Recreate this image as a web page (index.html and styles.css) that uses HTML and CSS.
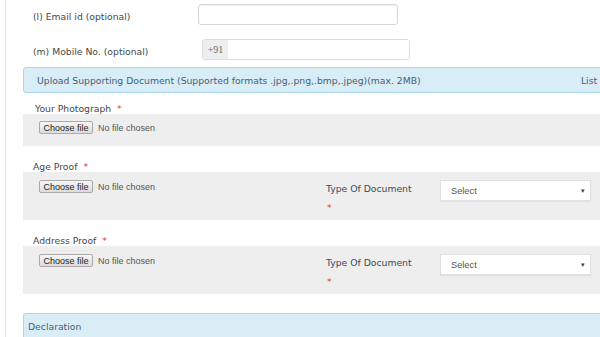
FILE: index.html
```html
<!DOCTYPE html>
<html lang="en">

<head>
  <meta charset="UTF-8">
  <title>Application Form</title>
  <link rel="stylesheet" href="styles.css">
</head>

<body>
  <div class="page">
    <div class="field-row">
      <label class="field-label">(l) Email id (optional)</label>
      <input class="text-input" type="text">
    </div>

    <div class="field-row mobile">
      <label class="field-label">(m) Mobile No. (optional)</label>
      <div class="input-group">
        <span class="addon">+91</span>
        <input class="group-input" type="text">
      </div>
    </div>

    <div class="panel">
      <span>Upload Supporting Document (Supported formats .jpg,.png,.bmp,.jpeg)(max. 2MB)</span>
      <span class="panel-right">List of</span>
    </div>

    <div class="upload first">
      <div class="upload-label photo">Your Photograph <span class="req">*</span></div>
      <div class="upload-box short">
        <div class="file">
          <span class="file-btn">Choose file</span>
          <span class="file-name">No file chosen</span>
        </div>
      </div>
    </div>

    <div class="upload">
      <div class="upload-label">Age Proof <span class="req">*</span></div>
      <div class="upload-box">
        <div class="file">
          <span class="file-btn">Choose file</span>
          <span class="file-name">No file chosen</span>
        </div>
        <div class="doc-type">Type Of Document<br><span class="req">*</span></div>
        <div class="select">Select<span class="caret">▾</span></div>
      </div>
    </div>

    <div class="upload">
      <div class="upload-label">Address Proof <span class="req">*</span></div>
      <div class="upload-box">
        <div class="file">
          <span class="file-btn">Choose file</span>
          <span class="file-name">No file chosen</span>
        </div>
        <div class="doc-type">Type Of Document<br><span class="req">*</span></div>
        <div class="select">Select<span class="caret">▾</span></div>
      </div>
    </div>

    <div class="panel declaration">Declaration</div>
  </div>
</body>

</html>
```

FILE: styles.css
```css
body {
  margin: 0;
  background: #fff;
  font-family: "DejaVu Sans", Verdana, sans-serif;
  font-size: 9.25px;
  color: #474747;
  overflow: hidden;
}

.page {
  margin-left: 5px;
  border-left: 1px solid #e2e2e2;
  padding-left: 17px;
  width: 618px;
  height: 337px;
  padding-top: 4px;
  box-sizing: border-box;
  overflow: hidden;
}

.field-row {
  display: flex;
  align-items: center;
  padding-left: 10px;
}

.field-label {
  width: 165px;
  padding-top: 3px;
}

.text-input {
  width: 200px;
  height: 21px;
  box-sizing: border-box;
  border: 1px solid #d6d6d6;
  border-radius: 3px;
  box-shadow: inset 0 1px 1px rgba(0, 0, 0, 0.06);
  margin: 0;
}

.mobile {
  margin-top: 14px;
}

.mobile .field-label {
  width: 169px;
}

.input-group {
  display: flex;
  width: 208px;
  height: 21px;
  border: 1px solid #dcdcdc;
  border-radius: 3px;
  box-sizing: border-box;
  overflow: hidden;
}

.addon {
  width: 36px;
  background: #eee;
  color: #666;
  font-family: "Liberation Serif", serif;
  font-size: 10px;
  display: flex;
  align-items: center;
  justify-content: center;
}

.group-input {
  flex: 1;
  border: 0;
  margin: 0;
}

.panel {
  display: flex;
  justify-content: space-between;
  align-items: center;
  margin-top: 7px;
  height: 26px;
  box-sizing: border-box;
  padding: 0 13px;
  background: #d9edf7;
  border: 1px solid #a9d6ec;
  border-radius: 3px;
  color: #44607a;
}

.upload.first {
  margin-top: 10px;
}

.upload {
  margin-top: 15px;
}

.upload-label {
  padding-left: 10px;
  height: 11px;
  line-height: 11px;
}

.upload-label.photo {
  padding-left: 12px;
}

.req {
  color: #e8312f;
  margin-left: 3px;
}

.upload-box {
  display: grid;
  grid-template-columns: 303px 114px 151px;
  align-items: start;
  background: #eee;
  height: 48px;
  padding-top: 8px;
  box-sizing: border-box;
}

.upload-box.short {
  height: 32px;
  padding-top: 7px;
}

.file {
  display: flex;
  align-items: center;
  padding-left: 16px;
  font-family: "Liberation Sans", Arial, sans-serif;
  font-size: 9px;
}

.file-btn {
  width: 54px;
  height: 13px;
  box-sizing: border-box;
  border: 1px solid #aaa;
  border-radius: 2px;
  background: linear-gradient(#f6f6f6, #dcdcdc);
  color: #222;
  display: flex;
  align-items: center;
  justify-content: center;
}

.file-name {
  margin-left: 5px;
  color: #555;
}

.doc-type {
  line-height: 19px;
  margin-top: -1px;
  color: #3c4a5a;
}

.doc-type .req {
  margin-left: 1px;
}

.select {
  height: 21px;
  box-sizing: border-box;
  background: #fff;
  border: 1px solid #e0e0e0;
  box-shadow: 0 1px 1px rgba(0, 0, 0, 0.05);
  display: flex;
  align-items: center;
  justify-content: space-between;
  padding: 0 5px 0 10px;
  font-family: "Liberation Sans", Arial, sans-serif;
  color: #555;
}

.caret {
  font-size: 7px;
  color: #444;
}

.declaration {
  margin-top: 19px;
  padding-left: 4px;
  height: 30px;
  align-items: flex-start;
  padding-top: 7px;
}
```
